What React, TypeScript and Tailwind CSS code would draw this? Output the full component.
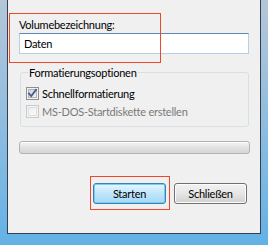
import { FC } from 'react'

const font = { fontFamily: 'Lato, "Noto Sans", sans-serif' }

const CheckBox: FC<{ checked?: boolean; disabled?: boolean }> = ({ checked, disabled }) => {
  return (
    <svg width="13" height="13" viewBox="0 0 13 13" className="shrink-0">
      <defs>
        <linearGradient id={disabled ? 'cbd' : 'cb'} x1="0" y1="0" x2="1" y2="1">
          <stop offset="0" stopColor={disabled ? '#eeeeee' : '#cdd1d6'} />
          <stop offset="1" stopColor={disabled ? '#fafafa' : '#f7f7f7'} />
        </linearGradient>
      </defs>
      <rect x="0.5" y="0.5" width="12" height="12" fill="#f4f4f4" stroke={disabled ? '#cacaca' : '#8e8f8f'} />
      <rect x="2.5" y="2.5" width="8" height="8" fill={`url(#${disabled ? 'cbd' : 'cb'})`} stroke={disabled ? '#dedede' : '#b0b4ba'} />
      {checked && (
        <path d="M3 6.5 L5.2 9 L10 2.8" fill="none" stroke="#4a5d8c" strokeWidth="1.8" strokeLinecap="square" />
      )}
    </svg>
  )
}

export default function App() {
  return (
    <div
      className="relative w-[268px] h-[245px] overflow-hidden pl-[7px] pr-[7px] pb-[11px] bg-gradient-to-b from-[#b4c6d8] via-[#8fbde0] to-[#62b2e6] text-[11px] tracking-[-0.25px] leading-[15px] text-black"
      style={font}
    >
      <div className="h-full bg-[#f0f0f0] border border-t-0 border-[#34404c] flex flex-col">
        <div className="mt-[17px] ml-[11px]">Volumebezeichnung:</div>
        <div className="mt-[1px] ml-[11px] w-[230px] h-[21px] bg-white border border-[#b5cfe7] border-t-[#5b8ab4] pl-[4px] flex items-center">
          Daten
        </div>

        <fieldset className="mt-[11px] ml-[12px] w-[229px] h-[62px] border border-[#d5dfe5] rounded-[3px] pl-[5px] pr-[5px]">
          <legend className="ml-[2px] px-[1px]">Formatierungsoptionen</legend>
          <div className="mt-[4px] h-[18px] flex items-center gap-[3px]">
            <CheckBox checked />
            <span>Schnellformatierung</span>
          </div>
          <div className="h-[18px] flex items-center gap-[3px] text-[#7a7a7a]">
            <CheckBox disabled />
            <span>MS-DOS-Startdiskette erstellen</span>
          </div>
        </fieldset>

        <div className="mt-[14px] ml-[11px] w-[231px] h-[13px] rounded-[3px] border border-[#b2b2b2] bg-gradient-to-b from-[#f4f4f4] via-[#e2e2e2] to-[#d6d6d6] shadow-[inset_0_1px_0_#ffffff]" />

        <div className="mt-[29px] flex gap-[8px] ml-[85px]">
          <button className="w-[73px] h-[21px] rounded-[3px] border border-[#3c7fb1] bg-gradient-to-b from-[#e9f6fd] via-[#bee6fd] to-[#a7d9f5] shadow-[inset_0_0_0_1px_#6fd0f5] flex items-center justify-center">
            Starten
          </button>
          <button className="w-[73px] h-[21px] rounded-[3px] border border-[#707070] bg-gradient-to-b from-[#f2f2f2] via-[#e6e6e6] to-[#d0d0d0] shadow-[inset_0_0_0_1px_#fcfcfc] flex items-center justify-center">
            Schließen
          </button>
        </div>
      </div>

      {/* annotation boxes */}
      <div className="absolute z-10 left-[9px] top-[13px] w-[152px] h-[50px] border border-[#f0472c]" />
      <div className="absolute z-10 left-[90px] top-[176px] w-[80px] h-[34px] border border-[#f0472c]" />
    </div>
  )
}
